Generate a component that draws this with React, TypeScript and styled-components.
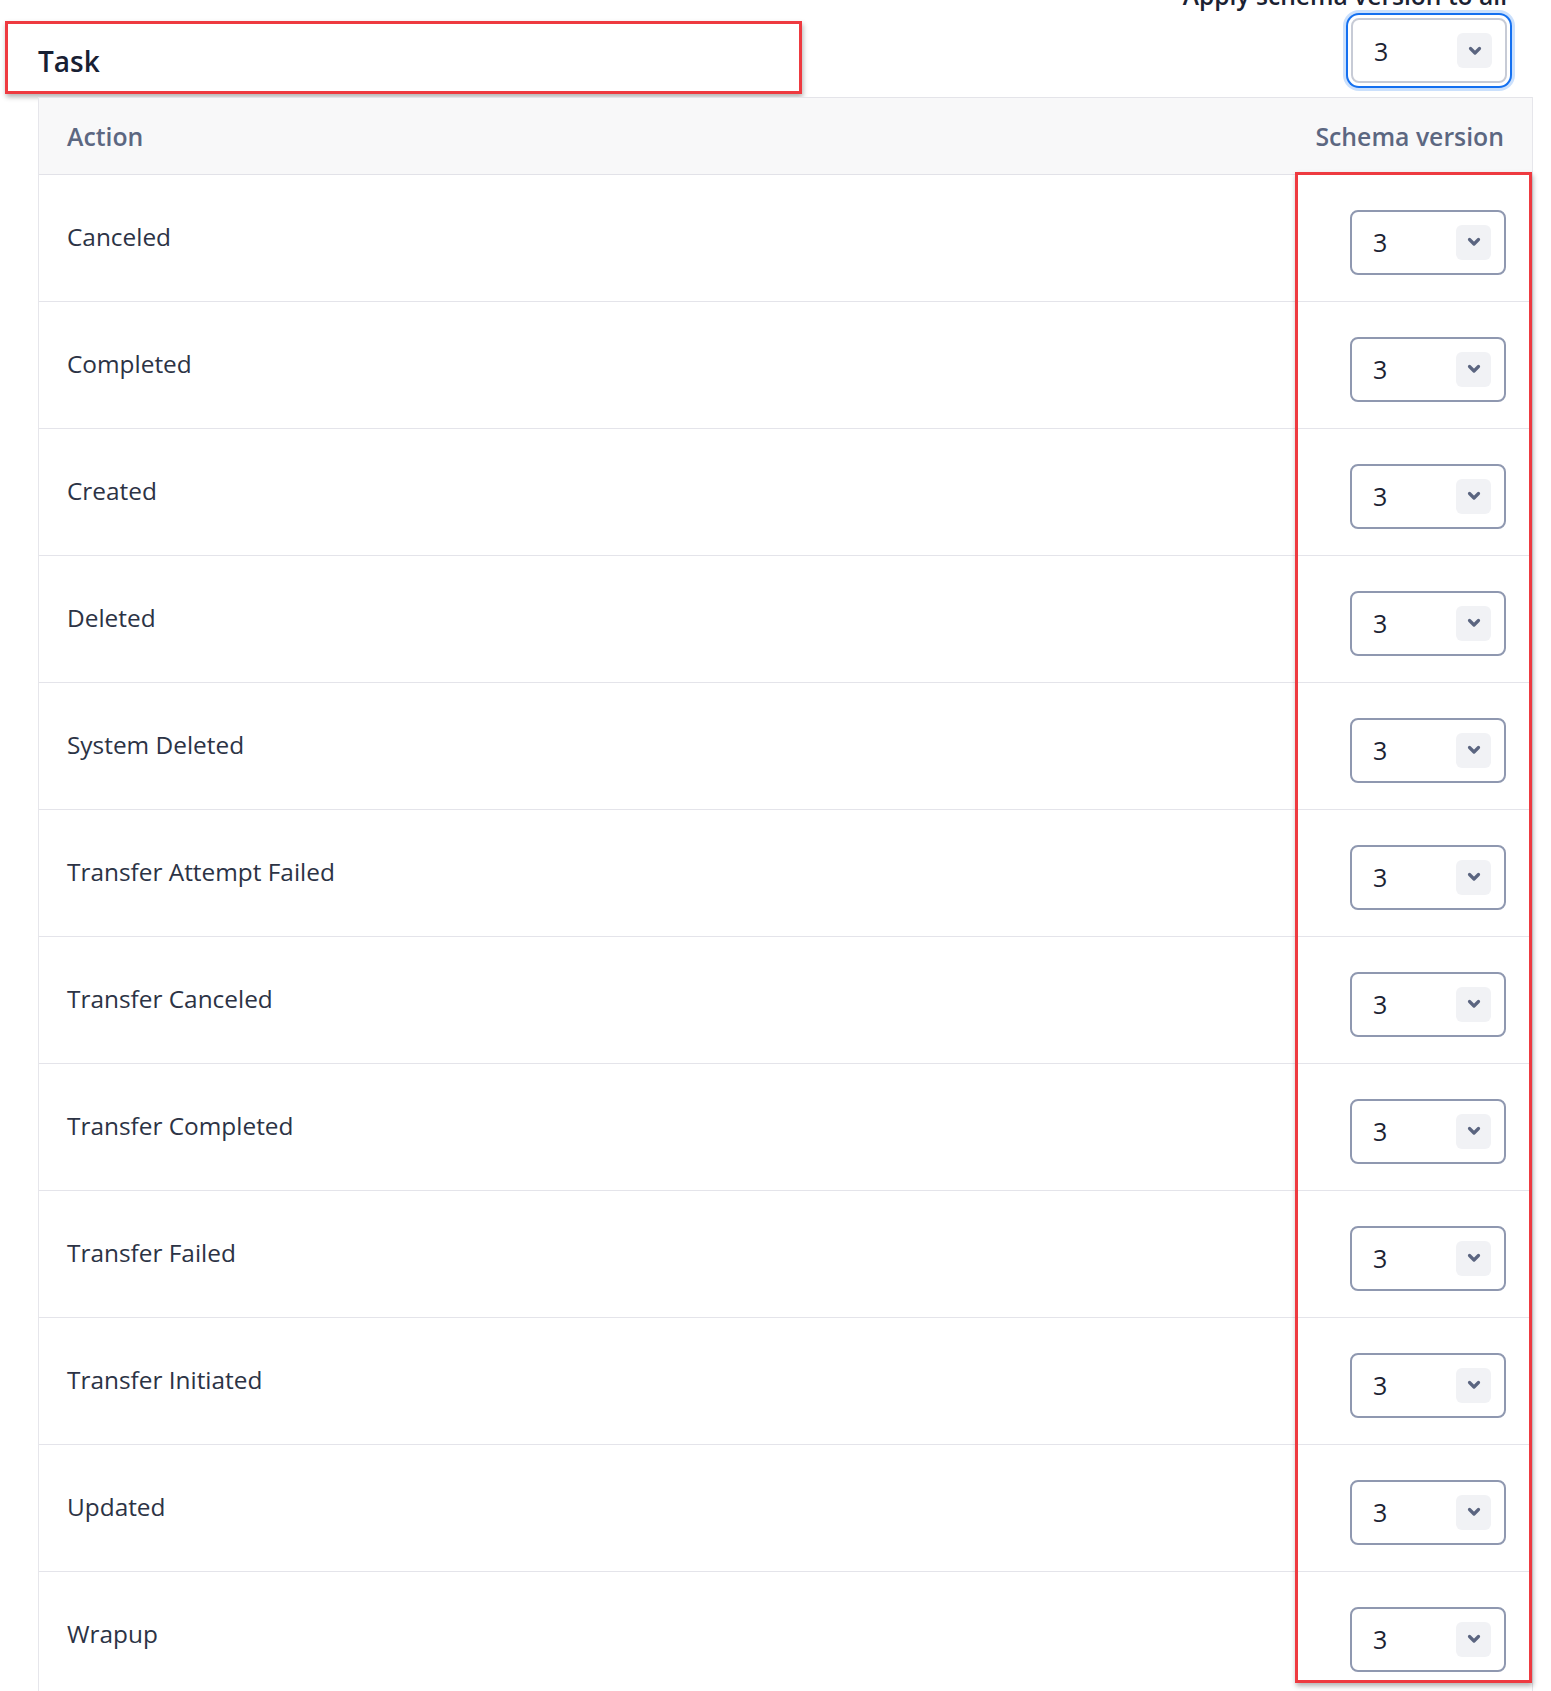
import styled, { createGlobalStyle } from 'styled-components';

const GlobalStyle = createGlobalStyle`
    html, body {
        margin: 0;
        padding: 0;
        background: #ffffff;
        overflow: hidden;
    }
    body {
        font-family: 'Open Sans', 'Noto Sans', sans-serif;
        color: #1b2232;
    }
`;

const Page = styled.div`
    width: 1551px;
    height: 1691px;
    overflow: hidden;
`;

const TopBar = styled.div`
    display: flex;
    justify-content: space-between;
    align-items: flex-start;
    height: 97px;
`;

const TitleBox = styled.div`
    margin: 21px 0 0 5px;
    width: 797px;
    height: 73px;
    box-sizing: border-box;
    border: 3px solid #ee3a40;
    box-shadow: 1px 3px 5px rgba(0, 0, 0, 0.3);
    display: flex;
    align-items: center;
    padding: 6px 0 0 30px;
    font-size: 28px;
    font-weight: 600;
    color: #182033;
`;

const ApplyGroup = styled.div`
    display: flex;
    flex-direction: column;
    align-items: flex-end;
    margin: -19px 44px 0 0;
    gap: 7px;
`;

const ApplyLabel = styled.div`
    font-size: 24.6px;
    line-height: 30px;
    font-weight: 600;
    color: #1b2232;
`;

const SelectBox = styled.div<{ $focused?: boolean }>`
    width: 156px;
    height: 65px;
    box-sizing: border-box;
    border: 2px solid ${(p) => (p.$focused ? '#c7cbd6' : '#8f98b0')};
    border-radius: 8px;
    background: #ffffff;
    display: flex;
    align-items: center;
    justify-content: space-between;
    padding: 0 13px 0 21px;
    box-shadow: ${(p) =>
        p.$focused
            ? '0 0 0 3px #ffffff, 0 0 0 5px #1470f0, 0 0 0 8px rgba(20, 112, 240, 0.22)'
            : 'none'};
`;

const SelectValue = styled.span`
    font-size: 25px;
    color: #1b2232;
`;

const ChevronBox = styled.span`
    width: 35px;
    height: 35px;
    border-radius: 6px;
    background: #f1f2f5;
    display: flex;
    align-items: center;
    justify-content: center;
`;

const TableWrap = styled.div`
    position: relative;
    margin: 0 18px 0 38px;
    border-left: 1px solid #e6e6eb;
    border-right: 1px solid #e6e6eb;
`;

const HeaderRow = styled.div`
    display: flex;
    justify-content: space-between;
    align-items: center;
    height: 78px;
    box-sizing: border-box;
    background: #f8f8f9;
    border-top: 1px solid #e4e4e9;
    border-bottom: 1px solid #e2e2e8;
    padding: 0 28px 0 28px;
    font-size: 24.8px;
    font-weight: 600;
    color: #5c6781;
`;

const BodyRow = styled.div`
    display: flex;
    justify-content: space-between;
    align-items: center;
    height: 127px;
    box-sizing: border-box;
    border-bottom: 1px solid #e4e4ea;
    padding: 0 26px 0 28px;
`;

const ActionName = styled.span`
    font-size: 24.4px;
    color: #2c3345;
    margin-top: -3px;
`;

const SelectCell = styled.div`
    margin-top: 8px;
`;

const ColumnHighlight = styled.div`
    position: absolute;
    top: 75px;
    right: 0;
    width: 237px;
    height: 1511px;
    box-sizing: border-box;
    border: 3px solid #ee3a40;
    box-shadow: 1px 3px 5px rgba(0, 0, 0, 0.3);
    pointer-events: none;
`;

const actions = [
    'Canceled',
    'Completed',
    'Created',
    'Deleted',
    'System Deleted',
    'Transfer Attempt Failed',
    'Transfer Canceled',
    'Transfer Completed',
    'Transfer Failed',
    'Transfer Initiated',
    'Updated',
    'Wrapup',
];

const Chevron = () => (
    <svg width="18" height="12" viewBox="0 0 18 12">
        <path d="M4.5 3.5 L9 8 L13.5 3.5" fill="none" stroke="#5b6580" strokeWidth="3.2" strokeLinecap="round" strokeLinejoin="round" />
    </svg>
);

const VersionSelect = ({ focused }: { focused?: boolean }) => (
    <SelectBox $focused={focused}>
        <SelectValue>3</SelectValue>
        <ChevronBox>
            <Chevron />
        </ChevronBox>
    </SelectBox>
);

const App = () => {
    return (
        <Page>
            <GlobalStyle />
            <TopBar>
                <TitleBox>Task</TitleBox>
                <ApplyGroup>
                    <ApplyLabel>Apply schema version to all</ApplyLabel>
                    <VersionSelect focused />
                </ApplyGroup>
            </TopBar>
            <TableWrap>
                <HeaderRow>
                    <span>Action</span>
                    <span>Schema version</span>
                </HeaderRow>
                {
                    actions.map((action) => (
                        <BodyRow key={action}>
                            <ActionName>{action}</ActionName>
                            <SelectCell>
                                <VersionSelect />
                            </SelectCell>
                        </BodyRow>
                    ))
                }
                <ColumnHighlight />
            </TableWrap>
        </Page>
    );
};

export default App;
